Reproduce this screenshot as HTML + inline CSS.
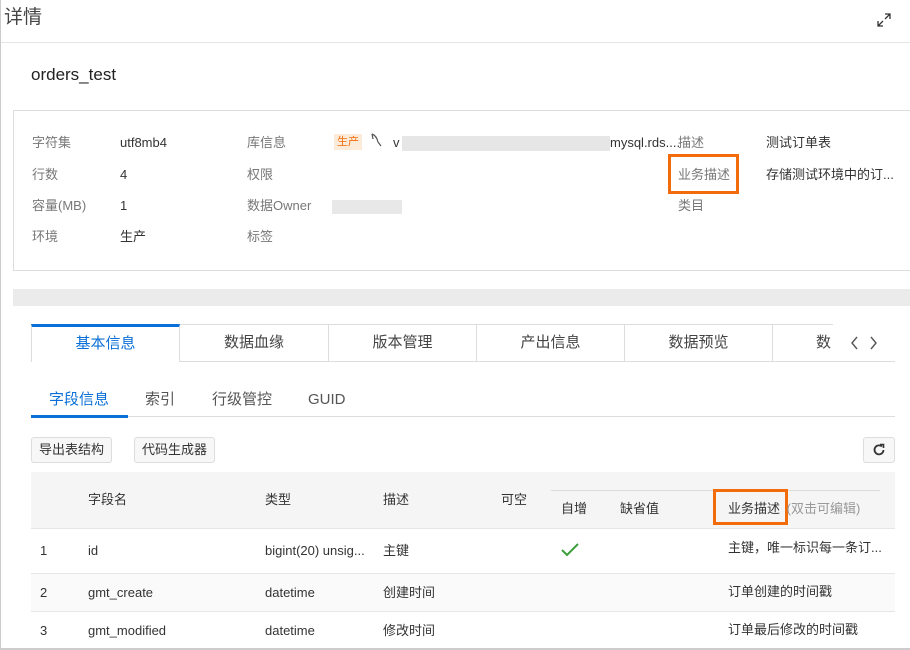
<!DOCTYPE html>
<html><head><meta charset="utf-8"><style>
*{margin:0;padding:0;box-sizing:border-box}
body{width:910px;height:650px;overflow:hidden;background:#fff;font-family:"Liberation Sans","Noto Sans CJK SC",sans-serif;color:#333;position:relative;font-size:13px}
.a{position:absolute;white-space:nowrap;line-height:16px}
.lb{color:#777}
.tab{position:absolute;top:324px;height:38px;border:1px solid #ddd;border-left:none;text-align:center;line-height:36px;font-size:15px;color:#444;background:#fff}
.btn{position:absolute;top:437px;height:26px;border:1px solid #ddd;border-radius:3px;background:#f7f7f7;font-size:13px;line-height:24px;padding:0 7px;color:#333}
</style></head><body>
<div class="a" style="left:0;top:0;width:1px;height:650px;background:#ccc"></div>
<div class="a" style="left:4px;top:7px;font-size:19px;line-height:22px;color:#444">详情</div>
<svg class="a" style="left:876px;top:12px" width="16" height="16" viewBox="0 0 16 16" fill="none" stroke="#333" stroke-width="1.3"><path d="M9 2h5v5M14 2l-5 5M7 14H2V9M2 14l5-5"/></svg>
<div class="a" style="left:1px;top:42px;width:909px;height:1px;background:#e5e5e5"></div>
<div class="a" style="left:31px;top:65px;font-size:17px;line-height:20px;color:#222">orders_test</div>

<div class="a" style="left:13px;top:110px;width:897px;height:161px;border:1px solid #ddd;border-right:none"></div>
<div class="a lb" style="left:32px;top:135px">字符集</div><div class="a" style="left:120px;top:135px">utf8mb4</div>
<div class="a lb" style="left:32px;top:167px">行数</div><div class="a" style="left:120px;top:167px">4</div>
<div class="a lb" style="left:32px;top:198px">容量(MB)</div><div class="a" style="left:120px;top:198px">1</div>
<div class="a lb" style="left:32px;top:229px">环境</div><div class="a" style="left:120px;top:229px">生产</div>
<div class="a lb" style="left:247px;top:135px">库信息</div>
<div class="a" style="left:334px;top:134px;background:#fdebd9;color:#f26c0c;font-size:11px;padding:0 3px">生产</div>
<svg class="a" style="left:370px;top:132px" width="14" height="16" viewBox="0 0 14 16" fill="none" stroke="#555" stroke-width="1.2"><path d="M2 2c3 1 5 4 6 8l3 4M2 2l1 5"/></svg>
<div class="a" style="left:393px;top:135px">v</div>
<div class="a" style="left:402px;top:136px;width:208px;height:15px;background:#e6e6e6"></div>
<div class="a" style="left:610px;top:135px">mysql.rds....</div>
<div class="a lb" style="left:247px;top:167px">权限</div>
<div class="a lb" style="left:247px;top:198px">数据Owner</div>
<div class="a" style="left:332px;top:200px;width:70px;height:14px;background:#e8e8e8"></div>
<div class="a lb" style="left:247px;top:229px">标签</div>
<div class="a lb" style="left:678px;top:135px">描述</div><div class="a" style="left:766px;top:135px">测试订单表</div>
<div class="a" style="left:668px;top:154px;width:71px;height:40px;border:3px solid #f26c0c"></div>
<div class="a lb" style="left:678px;top:167px">业务描述</div><div class="a" style="left:766px;top:167px">存储测试环境中的订...</div>
<div class="a lb" style="left:678px;top:198px">类目</div>

<div class="a" style="left:13px;top:289px;width:897px;height:17px;background:#ebebeb"></div>

<div class="tab" style="left:31px;width:149px;border-left:1px solid #ddd;border-top:3px solid #0a6fd6;border-bottom:none;color:#0a6fd6;line-height:34px">基本信息</div>
<div class="tab" style="left:180px;width:149px">数据血缘</div>
<div class="tab" style="left:329px;width:148px">版本管理</div>
<div class="tab" style="left:477px;width:148px">产出信息</div>
<div class="tab" style="left:625px;width:148px">数据预览</div>
<div class="tab" style="left:773px;width:60px;border-right:none;text-align:left;padding-left:43px;overflow:hidden">数</div>
<div class="a" style="left:833px;top:361px;width:62px;height:1px;background:#ddd"></div>
<svg class="a" style="left:848px;top:336px" width="36" height="14" viewBox="0 0 36 14" fill="none" stroke="#555" stroke-width="1.4"><path d="M9 1L4 7l5 6M23 1l5 6-5 6"/></svg>

<div class="a" style="left:49px;top:391px;font-size:15px;line-height:18px;color:#0a6fd6">字段信息</div>
<div class="a" style="left:145px;top:391px;font-size:15px;line-height:18px;color:#555">索引</div>
<div class="a" style="left:212px;top:391px;font-size:15px;line-height:18px;color:#555">行级管控</div>
<div class="a" style="left:308px;top:391px;font-size:15px;line-height:18px;color:#555">GUID</div>
<div class="a" style="left:31px;top:416px;width:864px;height:1px;background:#ddd"></div>
<div class="a" style="left:31px;top:415px;width:97px;height:3px;background:#0a6fd6"></div>

<div class="btn" style="left:31px">导出表结构</div>
<div class="btn" style="left:134px">代码生成器</div>
<div class="btn" style="left:863px;width:32px;padding:0"><svg style="position:absolute;left:8px;top:5px" width="14" height="14" viewBox="0 0 14 14" fill="none" stroke="#333" stroke-width="1.8"><path d="M11.5 7A4.5 4.5 0 1 1 10 3.5"/><path d="M8 1.5h3.5V5" stroke-width="1.6"/></svg></div>

<div class="a" style="left:31px;top:472px;width:864px;height:56px;background:#f5f5f5"></div>
<div class="a" style="left:551px;top:490px;width:329px;height:1px;background:#ddd"></div>
<div class="a" style="left:31px;top:528px;width:864px;height:1px;background:#e6e6e6"></div>
<div class="a" style="left:88px;top:492px">字段名</div>
<div class="a" style="left:265px;top:492px">类型</div>
<div class="a" style="left:383px;top:492px">描述</div>
<div class="a" style="left:501px;top:492px">可空</div>
<div class="a" style="left:561px;top:501px">自增</div>
<div class="a" style="left:620px;top:501px">缺省值</div>
<div class="a" style="left:713px;top:489px;width:75px;height:36px;border:3px solid #f26c0c"></div>
<div class="a" style="left:728px;top:501px">业务描述 <span style="color:#999;margin-left:3px">(双击可编辑)</span></div>

<div class="a" style="left:31px;top:573px;width:864px;height:1px;background:#e6e6e6"></div>
<div class="a" style="left:31px;top:574px;width:864px;height:37px;background:#fafafa"></div>
<div class="a" style="left:31px;top:611px;width:864px;height:1px;background:#e6e6e6"></div>
<div class="a" style="left:40px;top:543px">1</div><div class="a" style="left:88px;top:543px">id</div><div class="a" style="left:265px;top:543px">bigint(20) unsig...</div><div class="a" style="left:383px;top:543px">主键</div>
<svg class="a" style="left:560px;top:542px" width="20" height="16" viewBox="0 0 20 16" fill="none" stroke="#3ba03b" stroke-width="2"><path d="M2 8l5 5L18 2"/></svg>
<div class="a" style="left:728px;top:540px">主键，唯一标识每一条订...</div>
<div class="a" style="left:40px;top:585px">2</div><div class="a" style="left:88px;top:585px">gmt_create</div><div class="a" style="left:265px;top:585px">datetime</div><div class="a" style="left:383px;top:585px">创建时间</div><div class="a" style="left:728px;top:584px">订单创建的时间戳</div>
<div class="a" style="left:40px;top:623px">3</div><div class="a" style="left:88px;top:623px">gmt_modified</div><div class="a" style="left:265px;top:623px">datetime</div><div class="a" style="left:383px;top:623px">修改时间</div><div class="a" style="left:728px;top:622px">订单最后修改的时间戳</div>
<div class="a" style="left:0;top:648px;width:910px;height:2px;background:#ccc"></div>
</body></html>
